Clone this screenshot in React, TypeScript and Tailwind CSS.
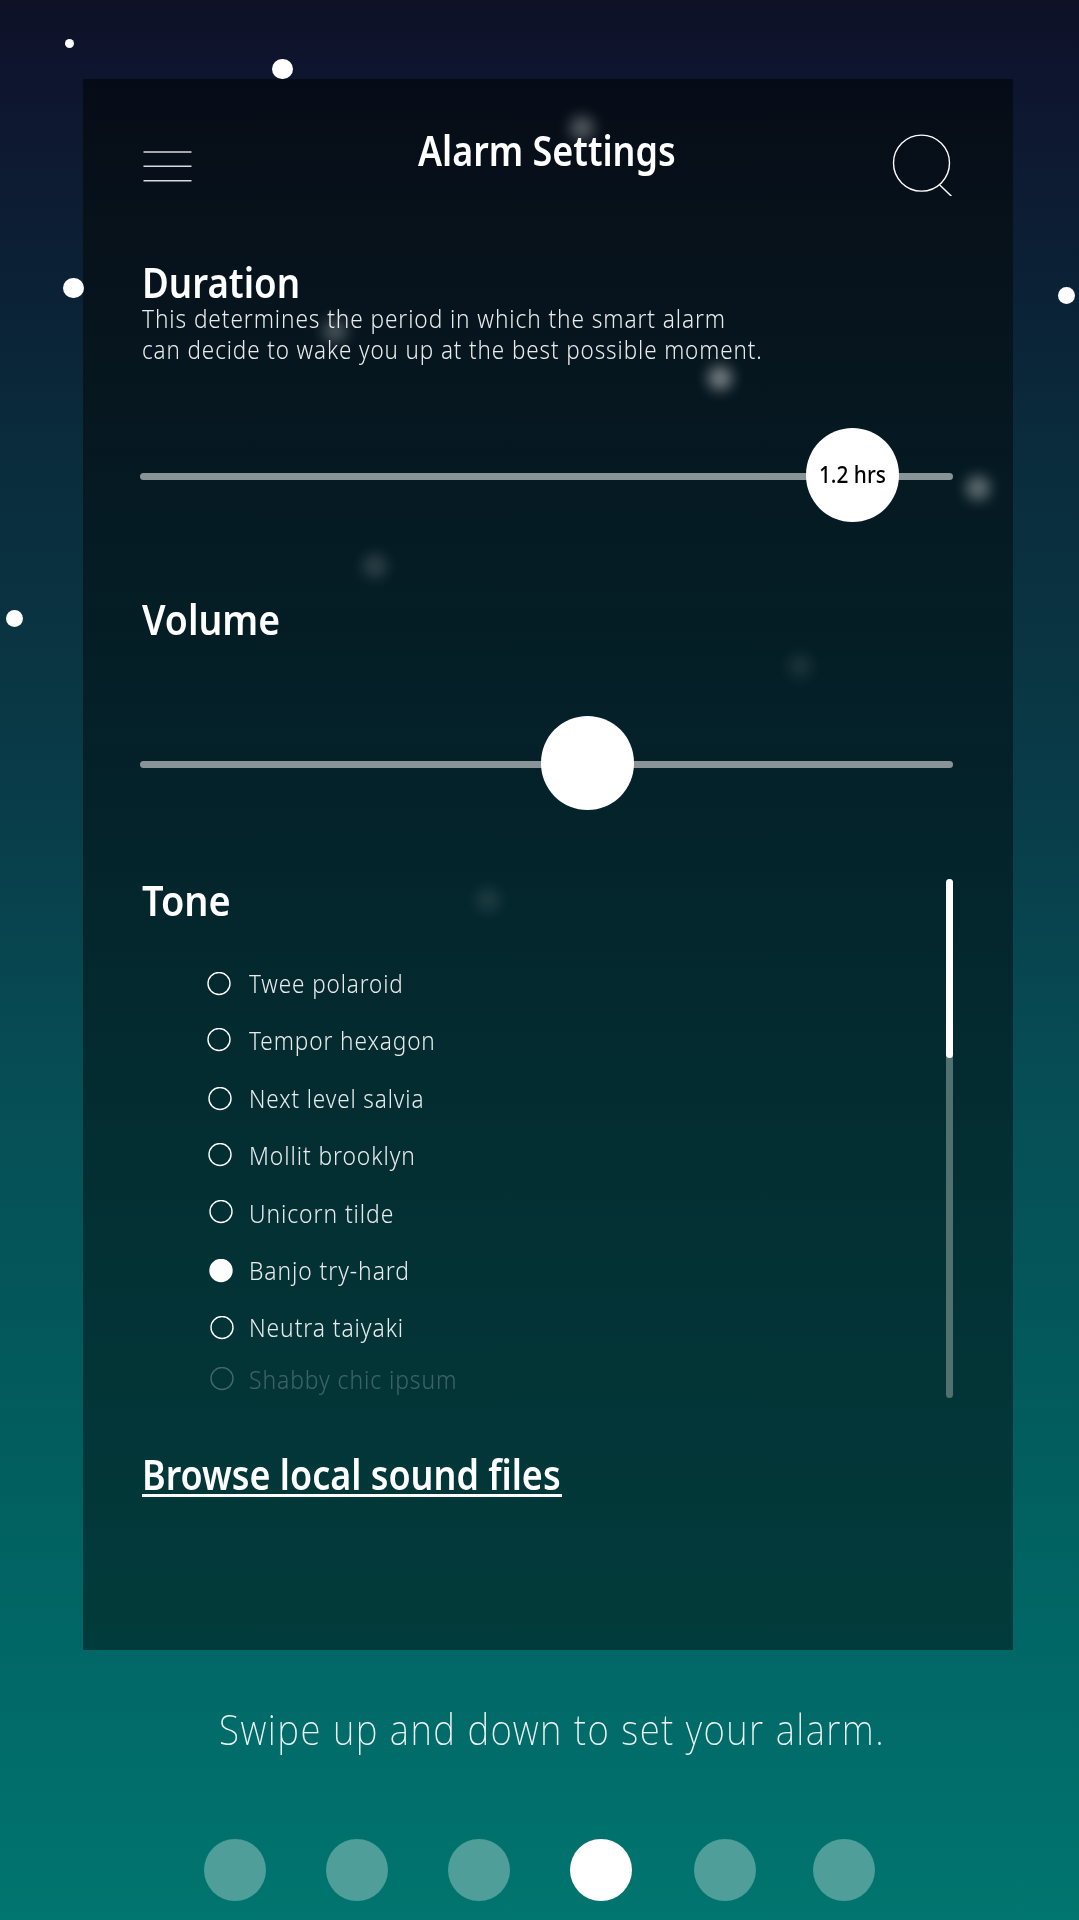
import { useLayoutEffect, useRef, useState, type ReactNode } from 'react';

/* Text squeezed horizontally to an exact advance width. */
function FitText({ width, className = '', children }: { width: number; className?: string; children: ReactNode }) {
  const ref = useRef<HTMLSpanElement>(null);
  const [scale, setScale] = useState(1);
  useLayoutEffect(() => {
    if (ref.current) setScale(width / ref.current.offsetWidth);
  }, [width]);
  return (
    <span className="block" style={{ width }}>
      <span
        ref={ref}
        className={`inline-block origin-left whitespace-nowrap align-top ${className}`}
        style={{ transform: `scaleX(${scale})` }}
      >
        {children}
      </span>
    </span>
  );
}

const heading = 'text-[42px] leading-[42px] font-semibold';
const light = 'text-[25.5px] leading-[31px] font-light tracking-[0.04em]';

function Stars() {
  return (
    <>
      <i className="absolute left-[65px] top-[39px] size-[9px] rounded-full bg-white" />
      <i className="absolute left-[272px] top-[58.5px] size-[20.5px] rounded-full bg-white" />
      <i className="absolute left-[63.3px] top-[277.5px] size-[20.5px] rounded-full bg-white" />
      <i className="absolute left-[1058px] top-[287px] size-[17px] rounded-full bg-white" />
      <i className="absolute left-[5.8px] top-[610px] size-[17px] rounded-full bg-white" />
    </>
  );
}

/* Stars seen through the panel. */
function Glows() {
  return (
    <>
      <i className="absolute left-[570px] top-[116px] size-[24px] rounded-full bg-white/31 blur-[7px]" />
      <i className="absolute left-[707.5px] top-[366px] size-[24px] rounded-full bg-white/45 blur-[7px]" />
      <i className="absolute left-[966px] top-[475.5px] size-[24px] rounded-full bg-white/37 blur-[7px]" />
      <i className="absolute left-[323px] top-[319px] size-[24px] rounded-full bg-white/27 blur-[7px]" />
      <i className="absolute left-[362.5px] top-[553.5px] size-[24px] rounded-full bg-white/16 blur-[7px]" />
      <i className="absolute left-[788px] top-[654px] size-[24px] rounded-full bg-white/9 blur-[7px]" />
      <i className="absolute left-[476px] top-[888px] size-[24px] rounded-full bg-white/10 blur-[7px]" />
    </>
  );
}

function Slider({ knob, children }: { knob: string; children?: ReactNode }) {
  return (
    <div className="relative -ml-[2px] flex h-[94px] w-[813px] items-center">
      <div className="mt-[3px] h-[7px] w-full rounded-full bg-[#899496]" />
      <div className={`absolute top-0 flex h-[94px] w-[93px] items-center justify-center rounded-full bg-white ${knob}`}>
        {children}
      </div>
    </div>
  );
}

const tones = [
  { name: 'Twee polaroid', width: 155, row: 'h-[57px]', dot: 'ml-[64.5px] mt-[11px]' },
  { name: 'Tempor hexagon', width: 187, row: 'h-[58px]', dot: 'ml-[65px] mt-[10px]' },
  { name: 'Next level salvia', width: 175.5, row: 'h-[57px]', dot: 'ml-[65.5px] mt-[11px]' },
  { name: 'Mollit brooklyn', width: 166.5, row: 'h-[58px]', dot: 'ml-[66px] mt-[10px]' },
  { name: 'Unicorn tilde', width: 145.5, row: 'h-[57px]', dot: 'ml-[66.5px] mt-[9px]' },
  { name: 'Banjo try-hard', width: 160.5, row: 'h-[57px]', dot: 'ml-[67px] mt-[11px]', on: true },
  { name: 'Neutra taiyaki', width: 155, row: 'h-[52px]', dot: 'ml-[67.5px] mt-[11px]' },
  { name: 'Shabby chic ipsum', width: 208.5, row: 'h-[40px] opacity-25', dot: 'ml-[68px] mt-[10px]' },
];

export default function App() {
  return (
    <main className="relative h-[1920px] w-[1079px] overflow-hidden bg-[linear-gradient(180deg,#0e1126_0px,#0e142d_60px,#0d1a32_160px,#0b2236_300px,#0a2b3b_430px,#0a3442_640px,#083f4b_850px,#064f56_1110px,#025c5d_1420px,#016867_1660px,#01756f_1920px)] font-['Noto_Sans',sans-serif] text-white">
      <Stars />
      <section className="ml-[83px] mt-[79px] h-[1571px] w-[930px] bg-[linear-gradient(180deg,#060c17_0px,#07121b_160px,#06161f_300px,#051b23_450px,#04222a_720px,#032b30_970px,#033336_1230px,#023b3b_1571px)] pl-[59px]">
        <header className="flex h-[165px]">
          <svg className="mt-[70px] h-[36px] w-[50px]" viewBox="0 0 50 36" stroke="#d9dbdd" strokeWidth="1.5">
            <path d="M1.5 3h48M1.5 17.200h48M1.5 31.800h48" />
          </svg>
          <h1 className="ml-[226px] mt-[50px]">
            <FitText width={258} className={heading}>Alarm Settings</FitText>
          </h1>
          <svg className="ml-[216px] mt-[53px] size-[64px]" viewBox="0 0 64 64" fill="none" stroke="#fff" strokeWidth="1.4">
            <circle cx="29.500" cy="31.100" r="28" />
            <path d="M47.500 52.700l12 11.600" />
          </svg>
        </header>

        <h2 className="mt-[16.500px]">
          <FitText width={158} className={heading}>Duration</FitText>
        </h2>
        <div className="text-[#e9ebec]">
          <FitText width={584} className={light}>This determines the period in which the smart alarm</FitText>
          <FitText width={620.5} className={light}>can decide to wake you up at the best possible moment.</FitText>
        </div>
        <div className="mt-[63px]">
          <Slider knob="left-[665.500px]">
            <FitText width={68} className="pl-[1px] text-[23px] leading-[29px] font-medium text-black">1.2 hrs</FitText>
          </Slider>
        </div>

        <h2 className="mt-[76px]">
          <FitText width={138} className={heading}>Volume</FitText>
        </h2>
        <div className="mt-[76px]">
          <Slider knob="left-[401px]" />
        </div>

        <div className="flex h-[560px] justify-between pr-[60px] pt-[69px]">
          <div>
            <h2>
              <FitText width={88.5} className={heading}>Tone</FitText>
            </h2>
            <ul className="mt-[40.500px] text-[#e9ebec]">
              {tones.map((t) => (
                <li key={t.name} className={`flex items-start ${t.row}`}>
                  <span className="w-[107px] shrink-0">
                    <svg className={`block size-[24px] ${t.dot}`} viewBox="0 0 24 24" stroke="#fff" strokeWidth="1.4" fill={t.on ? '#fff' : 'none'}>
                      <circle cx="12" cy="11.500" r="11" />
                    </svg>
                  </span>
                  <FitText width={t.width} className="text-[25.500px] leading-[44px] font-light tracking-[0.04em]">{t.name}</FitText>
                </li>
              ))}
            </ul>
          </div>
          <div className="h-[519px] w-[7px] shrink-0 rounded-full bg-[#51706f]">
            <div className="h-[179px] rounded-full bg-white" />
          </div>
        </div>

        <a className="mt-[83px] block h-[44px] w-[419.500px] border-b-[3px] border-white" href="#files">
          <FitText width={419} className={heading}>Browse local sound files</FitText>
        </a>
      </section>

      <p className="ml-[219px] mt-[49px] text-[#f0f6f5]">
        <FitText width={666} className="text-[43px] leading-[60px] font-extralight tracking-[0.04em]">Swipe up and down to set your alarm.</FitText>
      </p>

      <nav className="ml-[204px] mt-[80px] flex">
        <span className="mr-[60px] size-[62px] rounded-full bg-[#4f9e9a]" />
        <span className="mr-[60px] size-[62px] rounded-full bg-[#4f9e9a]" />
        <span className="mr-[60px] size-[62px] rounded-full bg-[#4f9e9a]" />
        <span className="mr-[62px] size-[62px] rounded-full bg-white" />
        <span className="mr-[57px] size-[62px] rounded-full bg-[#4f9e9a]" />
        <span className="size-[62px] rounded-full bg-[#4f9e9a]" />
      </nav>
      <Glows />
    </main>
  );
}
